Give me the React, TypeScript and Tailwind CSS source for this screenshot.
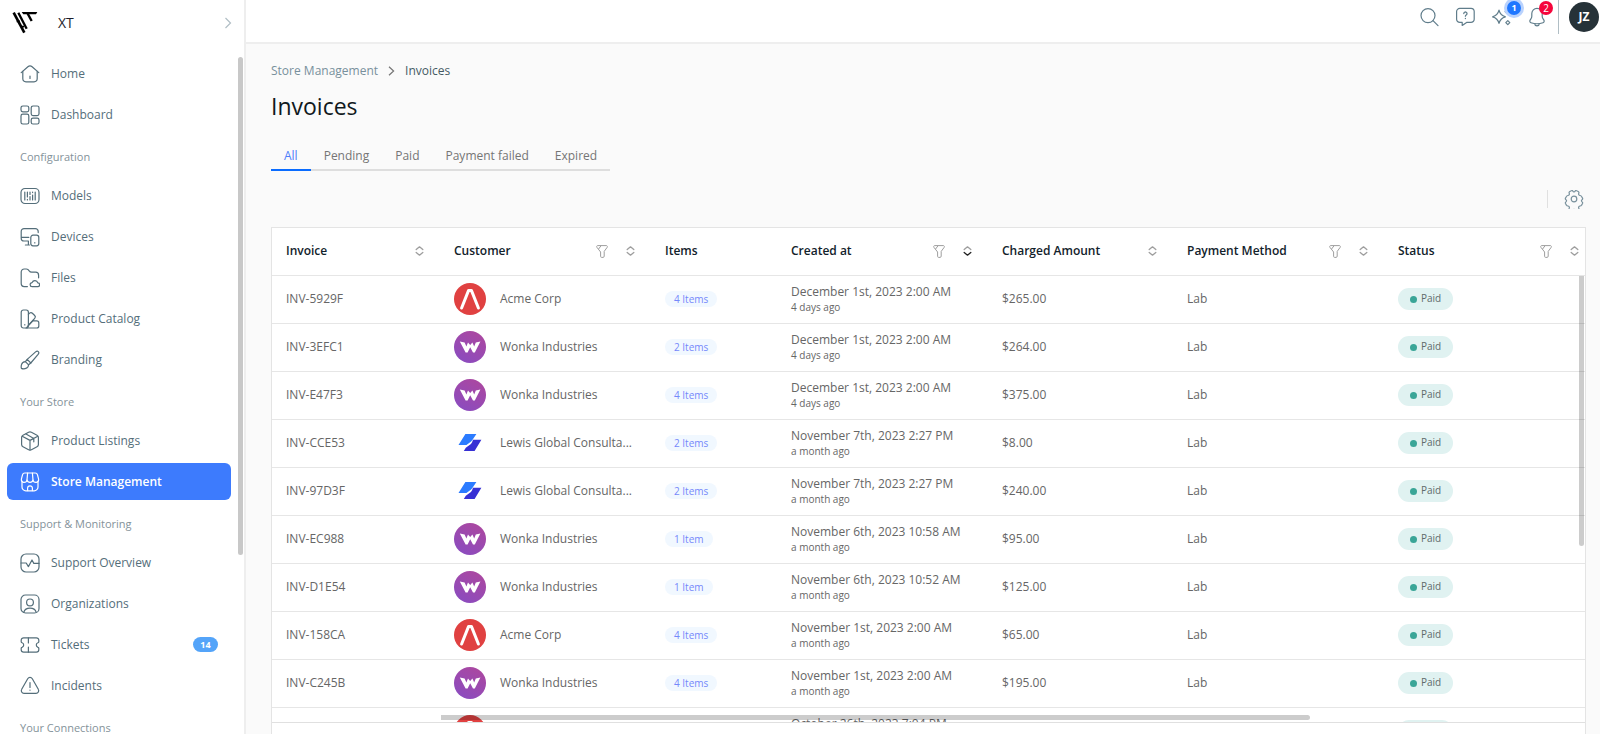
import { useState, type ReactNode } from 'react';
import clsx from 'clsx';

interface NavItem {
  label: string;
  icon: ReactNode;
  badge?: number;
}

interface NavSection {
  title?: string;
  items: NavItem[];
}

interface Column {
  key: string;
  label: string;
  width: string;
  filter?: boolean;
  sort?: boolean;
  sorted?: boolean;
}

interface Invoice {
  id: string;
  customer: 'Acme Corp' | 'Wonka Industries' | 'Lewis Global Consulta...';
  items: string;
  createdAt: string;
  ago: string;
  amount: string;
}

function Icon({ children, size = 20 }: { children: ReactNode; size?: number }) {
  return (
    <svg
      width={size}
      height={size}
      viewBox="0 0 20 20"
      fill="none"
      stroke="currentColor"
      strokeWidth="1.2"
      strokeLinecap="round"
      strokeLinejoin="round"
      className="shrink-0"
      aria-hidden="true"
    >
      {children}
    </svg>
  );
}

const sections: NavSection[] = [
  {
    items: [
      {
        label: 'Home',
        icon: (
          <Icon>
            <path d="M1.2 8.6 7.9 2.8a3.2 3.2 0 0 1 4.2 0l6.700 5.800" />
            <path d="M2.8 7.400v7.200a3.200 3.200 0 0 0 3.200 3.200h8a3.200 3.200 0 0 0 3.200-3.200V7.400M10 12v2.400" />
          </Icon>
        ),
      },
      {
        label: 'Dashboard',
        icon: (
          <Icon>
            <rect x="1" y="1" width="7.8" height="5.8" rx="1.8" />
            <rect x="11.2" y="1" width="7.8" height="9.6" rx="1.8" />
            <rect x="1" y="9.2" width="7.8" height="9.8" rx="1.8" />
            <rect x="11.2" y="13.2" width="7.8" height="5.8" rx="1.8" />
          </Icon>
        ),
      },
    ],
  },
  {
    title: 'Configuration',
    items: [
      {
        label: 'Models',
        icon: (
          <Icon>
            <rect x="1" y="2.5" width="18" height="15" rx="4" />
            <path d="M4.8 6v8M7.4 6v5M7.4 13.4v.6M10 6v2.4M10 10.5V14M12.6 9v5M12.6 6v.6M15.2 6v8" />
          </Icon>
        ),
      },
      {
        label: 'Devices',
        icon: (
          <Icon>
            <path d="M18.2 5.6V4.4a2.8 2.8 0 0 0-2.8-2.8H4A2.8 2.8 0 0 0 1.2 4.4v6.8A2.8 2.8 0 0 0 4 14h4.4M1.2 10.400h7.600M8.400 14v4M5.400 18h4" />
            <rect x="10.8" y="8.2" width="8" height="10.6" rx="2.2" />
            <path d="M14.8 15.6v.4" />
          </Icon>
        ),
      },
      {
        label: 'Files',
        icon: (
          <Icon>
            <path d="M7.4 18.6H4.2A3 3 0 0 1 1.2 15.6V4a3 3 0 0 1 3-3h2.2c1.4 0 2.2.9 2.8 1.9.6.9 1.3 1.3 2.4 1.3h4a3 3 0 0 1 3 3v2.6" />
            <path d="M12.2 18.6a2 2 0 0 1-.1-4 3 3 0 0 1 5.7.2 1.900 1.900 0 0 1-.2 3.800z" />
          </Icon>
        ),
      },
      {
        label: 'Product Catalog',
        icon: (
          <Icon>
            <rect x="1.2" y="1" width="7.2" height="18" rx="2.2" />
            <path d="M8.400 5.400l1.200-1.200a2 2 0 0 1 2.800 0l2.300 2.300a2 2 0 0 1 0 2.800L8.200 16.400" />
            <path d="M13.200 11.800h3.600a2 2 0 0 1 2 2V17a2 2 0 0 1-2 2H6M13.600 11l-7 7.600M4.800 15.600v.3" />
          </Icon>
        ),
      },
      {
        label: 'Branding',
        icon: (
          <Icon>
            <path d="M7.2 9.4 15.6 1.900c1-.8 2-.9 2.700-.3.7.7.6 1.800-.2 2.800L10.800 13" />
            <path d="M7.2 9.4 5.4 11.600l3.200 3.200L10.800 13z" />
            <path d="M5.4 11.6c-2 .2-3.400 1.300-3.900 3.100-.3 1.100-.4 2.700-.1 3.700 1.300.6 3.800.5 5.200-.3 1.300-.7 2-1.900 2-3.300" />
          </Icon>
        ),
      },
    ],
  },
  {
    title: 'Your Store',
    items: [
      {
        label: 'Product Listings',
        icon: (
          <Icon>
            <path d="M8.600 1.300a3 3 0 0 1 2.800 0l5.600 3a2.600 2.600 0 0 1 1.400 2.300v6.800a2.600 2.600 0 0 1-1.400 2.300l-5.600 3a3 3 0 0 1-2.800 0l-5.600-3a2.600 2.600 0 0 1-1.400-2.300V6.600A2.600 2.600 0 0 1 3 4.300z" />
            <path d="M2.200 5.200 10 9.400l7.800-4.200M10 9.400V19M6 3l7.800 4.400v3.400" />
          </Icon>
        ),
      },
      {
        label: 'Store Management',
        icon: (
          <Icon>
            <path d="M2 9.200V15a3.800 3.800 0 0 0 3.800 3.800h8.400A3.800 3.800 0 0 0 18 15V9.200" />
            <path d="M4.800 1h10.400a2.400 2.400 0 0 1 2.300 1.800l1.100 4.400a2.600 2.600 0 0 1-2.600 3.200c-1.600 0-2.800-1-3-2.400a3.100 3.100 0 0 1-6 0c-.2 1.400-1.400 2.400-3 2.400a2.600 2.600 0 0 1-2.600-3.200l1.100-4.400A2.400 2.400 0 0 1 4.800 1z" />
            <path d="M7.600 1 7 8M12.400 1 13 8M7.600 18.600v-2.400a2.400 2.400 0 0 1 4.800 0v2.400" />
          </Icon>
        ),
      },
    ],
  },
  {
    title: 'Support & Monitoring',
    items: [
      {
        label: 'Support Overview',
        icon: (
          <Icon>
            <rect x="1" y="1" width="18" height="18" rx="5" />
            <path d="M1 10h5.200l2.200 3.600L12 7l1.800 3.400H19" />
          </Icon>
        ),
      },
      {
        label: 'Organizations',
        icon: (
          <Icon>
            <rect x="1" y="1" width="18" height="18" rx="4.5" />
            <circle cx="10" cy="8.4" r="3.4" />
            <path d="M3.800 18.200c.8-2.600 3.200-4 6.200-4s5.400 1.400 6.200 4" />
          </Icon>
        ),
      },
      {
        label: 'Tickets',
        badge: 14,
        icon: (
          <Icon>
            <path d="M3.600 2.800h12.800A2.400 2.400 0 0 1 18.800 5.200v1.600c0 .5-.3.800-.8.900a2.400 2.400 0 0 0 0 4.600c.5.100.8.400.8.900v1.600a2.400 2.400 0 0 1-2.400 2.400H3.600a2.400 2.400 0 0 1-2.400-2.400v-1.600c0-.5.300-.8.800-.9a2.400 2.400 0 0 0 0-4.600c-.5-.1-.8-.4-.8-.9V5.200a2.400 2.400 0 0 1 2.400-2.400z" />
            <path d="M8.400 2.800V8M8.400 12v5.200" />
          </Icon>
        ),
      },
      {
        label: 'Incidents',
        icon: (
          <Icon>
            <path d="M7.700 2.700a2.700 2.700 0 0 1 4.600 0l6 10.500a2.700 2.700 0 0 1-2.300 4.100H4a2.700 2.700 0 0 1-2.300-4.100z" />
            <path d="M10 6.600v4.800M10 14v.2" />
          </Icon>
        ),
      },
    ],
  },
  { title: 'Your Connections', items: [] },
];

const tabs = ['All', 'Pending', 'Paid', 'Payment failed', 'Expired'];

const columns: Column[] = [
  { key: 'invoice', label: 'Invoice', width: 'w-[168px]', sort: true },
  { key: 'customer', label: 'Customer', width: 'w-[211px]', filter: true, sort: true },
  { key: 'items', label: 'Items', width: 'w-[126px]' },
  { key: 'created', label: 'Created at', width: 'w-[211px]', filter: true, sort: true, sorted: true },
  { key: 'amount', label: 'Charged Amount', width: 'w-[185px]', sort: true },
  { key: 'method', label: 'Payment Method', width: 'w-[211px]', filter: true, sort: true },
  { key: 'status', label: 'Status', width: 'w-[211px]', filter: true, sort: true },
];

const invoices: Invoice[] = [
  { id: 'INV-5929F', customer: 'Acme Corp', items: '4 Items', createdAt: 'December 1st, 2023 2:00 AM', ago: '4 days ago', amount: '$265.00' },
  { id: 'INV-3EFC1', customer: 'Wonka Industries', items: '2 Items', createdAt: 'December 1st, 2023 2:00 AM', ago: '4 days ago', amount: '$264.00' },
  { id: 'INV-E47F3', customer: 'Wonka Industries', items: '4 Items', createdAt: 'December 1st, 2023 2:00 AM', ago: '4 days ago', amount: '$375.00' },
  { id: 'INV-CCE53', customer: 'Lewis Global Consulta...', items: '2 Items', createdAt: 'November 7th, 2023 2:27 PM', ago: 'a month ago', amount: '$8.00' },
  { id: 'INV-97D3F', customer: 'Lewis Global Consulta...', items: '2 Items', createdAt: 'November 7th, 2023 2:27 PM', ago: 'a month ago', amount: '$240.00' },
  { id: 'INV-EC988', customer: 'Wonka Industries', items: '1 Item', createdAt: 'November 6th, 2023 10:58 AM', ago: 'a month ago', amount: '$95.00' },
  { id: 'INV-D1E54', customer: 'Wonka Industries', items: '1 Item', createdAt: 'November 6th, 2023 10:52 AM', ago: 'a month ago', amount: '$125.00' },
  { id: 'INV-158CA', customer: 'Acme Corp', items: '4 Items', createdAt: 'November 1st, 2023 2:00 AM', ago: 'a month ago', amount: '$65.00' },
  { id: 'INV-C245B', customer: 'Wonka Industries', items: '4 Items', createdAt: 'November 1st, 2023 2:00 AM', ago: 'a month ago', amount: '$195.00' },
  { id: 'INV-A71D0', customer: 'Acme Corp', items: '1 Item', createdAt: 'October 26th, 2023 7:04 PM', ago: 'a month ago', amount: '$85.00' },
];

function CustomerLogo({ customer }: { customer: Invoice['customer'] }) {
  if (customer === 'Acme Corp') {
    return (
      <svg width="32" height="32" viewBox="0 0 32 32" aria-hidden="true">
        <circle cx="16" cy="16" r="16" fill="#e04141" />
        <path d="M7.600 25 14.600 7.400h2.800L24.400 25" fill="none" stroke="#fff" strokeWidth="3" strokeLinecap="round" strokeLinejoin="round" />
      </svg>
    );
  }
  if (customer === 'Wonka Industries') {
    return (
      <svg width="32" height="32" viewBox="0 0 32 32" aria-hidden="true">
        <defs>
          <linearGradient id="wonka" x1="0.2" y1="1" x2="0.8" y2="0">
            <stop offset="0" stopColor="#8a4cc0" />
            <stop offset="1" stopColor="#ac479f" />
          </linearGradient>
        </defs>
        <circle cx="16" cy="16" r="16" fill="url(#wonka)" />
        <path d="M5.800 10.400 10.600 11.500 12.400 15.600 14 11.600 16.200 14 18.400 11.600 20.200 15.600 21.800 11.500 26.400 10.400 20.800 21.600H19L16.200 16.200 13.600 21.600H11.600z" fill="#fff" />
      </svg>
    );
  }
  return (
    <svg width="32" height="32" viewBox="0 0 32 32" aria-hidden="true">
      <path d="M11.400 7h11L18.200 13.200q-1 1.300-2.400 2.300l-3.400 2.600H4.500z" fill="#2b7bff" />
      <path d="M19 12.800h8.400L20.600 24H9.800l2-3.200 4.800-3.600q1-.8 1.500-1.900z" fill="#3730d4" />
    </svg>
  );
}

function FilterIcon() {
  return (
    <svg width="12" height="13" viewBox="0 0 12 13" fill="none" stroke="#9e9e9e" strokeWidth="1" strokeLinejoin="round" aria-hidden="true">
      <path d="M1.600.6h8.800c.9 0 1.300.9.8 1.700L8.200 6.400v4.800c0 .7-.5 1.200-1.200 1.200H5.600c-.6 0-1-.4-1-1V7L.9 2.300C.4 1.500.7.6 1.600.6zM5 .8 2.600 4" />
    </svg>
  );
}

function SortIcon({ sorted }: { sorted?: boolean }) {
  return (
    <svg width="9" height="10" viewBox="0 0 9 10" fill="none" strokeWidth="1.3" strokeLinejoin="round" strokeLinecap="round" aria-hidden="true">
      <path d="M1.200 3.600 4.500.8l3.300 2.800" stroke="#9e9e9e" />
      <path d="M1.200 6.400 4.500 9.200l3.300-2.800" stroke={sorted ? '#212121' : '#9e9e9e'} />
    </svg>
  );
}

function Sidebar() {
  return (
    <aside className="relative flex flex-col w-[246px] shrink-0 bg-white border-r-2 border-[#eeeeee]">
      <div className="flex items-center h-[45px] px-3 shrink-0">
        <svg width="26" height="22" viewBox="0 0 78 66" fill="none" stroke="#000" aria-hidden="true">
          <path d="M5 2 37 62" strokeWidth="8" />
          <path d="M19 2 44 50" strokeWidth="7" />
          <path d="M14 28h10M27 44h9" strokeWidth="5" />
          <path d="M29 0h47l-4 7H34z" fill="#000" stroke="none" />
          <path d="M47 5 59 27" strokeWidth="7" />
        </svg>
        <span className="ml-5 text-sm text-[#1c1c2b]">XT</span>
        <button aria-label="Switch workspace" className="ml-auto text-[#b0bec5]">
          <svg width="8" height="12" viewBox="0 0 8 12" fill="none" stroke="currentColor" strokeWidth="1.2" aria-hidden="true">
            <path d="M1.500 1 6.500 6l-5 5" />
          </svg>
        </button>
      </div>
      <nav className="flex-1 min-h-0 overflow-hidden pt-[10px] pl-[7px] pr-[13px]">
        {sections.map((section, i) => (
          <div key={i}>
            {section.title && (
              <h2 className="flex items-center h-10 px-[13px] text-[11px] text-[#84929a]">{section.title}</h2>
            )}
            {section.items.map((item) => {
              const active = item.label === 'Store Management';
              return (
                <a
                  key={item.label}
                  href="#"
                  className={clsx(
                    'flex items-center gap-[11px] h-[37px] mb-1 px-[13px] rounded-md text-xs',
                    active ? 'bg-[#3d7bfd] text-white font-semibold' : 'text-[#546e7a]',
                  )}
                >
                  {item.icon}
                  <span>{item.label}</span>
                  {item.badge && (
                    <span className="ml-auto w-[25px] rounded-full bg-[#54a4f9] text-center text-[9px] leading-[15px] font-bold text-white">
                      {item.badge}
                    </span>
                  )}
                </a>
              );
            })}
          </div>
        ))}
      </nav>
      <div className="absolute right-px top-[57px] w-[5px] h-[498px] rounded-full bg-[#c8c8c8]" />
    </aside>
  );
}

function TopBar() {
  return (
    <header className="flex items-start h-11 shrink-0 bg-white border-b-2 border-[#eeeeee]">
      <div className="flex items-center ml-auto h-[34px] pr-px text-[#607d8b]">
        <div className="flex items-center gap-4">
          <button aria-label="Search">
            <Icon>
              <circle cx="9" cy="8.600" r="7" />
              <path d="m14 13.600 5 5" />
            </Icon>
          </button>
          <button aria-label="Help">
            <Icon>
              <path d="M4.800 1.400h11.200A3.200 3.200 0 0 1 19.200 4.600v7.600a3.200 3.200 0 0 1-3.200 3.200h-4.400l-4.400 3v-3H4.800a3.200 3.200 0 0 1-3.200-3.200V4.600a3.200 3.200 0 0 1 3.200-3.200z" />
              <path d="M8.800 6.600a1.600 1.600 0 1 1 2.400 1.400c-.5.300-.8.600-.8 1.200M10.400 11.400v.2" strokeWidth="1.3" />
            </Icon>
          </button>
          <button aria-label="What's new" className="relative">
            <Icon>
              <path d="M8 3.200c.9 3.700 2.200 5.500 6.400 6.600-4.200 1.100-5.500 2.900-6.400 6.600C7.100 12.700 5.800 10.900 1.600 9.800 5.800 8.700 7.100 6.900 8 3.200z" />
              <path d="m16.800 13.600 2 2-2 2-2-2zM15.800 3l1.700 1.700-1.700 1.700-1.700-1.700z" />
            </Icon>
            <span className="absolute -top-[9px] left-[13px] flex items-center justify-center w-5 h-5 rounded-full bg-[#b9d2fd]">
              <span className="w-3.5 rounded-full bg-[#1f77ff] text-center text-[9px] leading-[14px] font-bold text-white">1</span>
            </span>
          </button>
          <button aria-label="Notifications" className="relative">
            <Icon>
              <path d="M10 1.400a5.200 5.200 0 0 0-5.200 5.200v2.600c0 1-.3 1.900-.9 2.700l-.8 1.200c-.6 1-.2 2.200.9 2.600 3.800 1.300 8.200 1.300 12 0 1.100-.4 1.500-1.600.9-2.600l-.8-1.200c-.6-.8-.9-1.700-.9-2.700V6.600A5.200 5.200 0 0 0 10 1.400zM7.600 17c.3 1.100 1.200 1.800 2.400 1.800s2.100-.7 2.400-1.800" />
            </Icon>
            <span className="absolute -top-[6px] left-[12px] w-3.5 rounded-full bg-[#f5063c] text-center text-[10px] leading-[14px] text-white">2</span>
          </button>
        </div>
        <div className="w-px h-full ml-[11px] mr-[10px] bg-[#b0bec5]" />
        <button className="w-[30px] h-[30px] rounded-full bg-[#263238] text-xs font-bold text-white">JZ</button>
      </div>
    </header>
  );
}

function InvoiceTable() {
  return (
    <section className="flex flex-col flex-1 min-h-0 bg-white border border-b-0 border-[#e4e4e4]">
      <div className="relative flex-1 min-h-0 overflow-hidden">
        <table className="table-fixed w-[1323px] text-left text-xs text-[#666666]">
          <thead>
            <tr className="h-[47px] border-b border-[#e6e6e6]">
              {columns.map((col) => (
                <th key={col.key} className={clsx('pl-[14px] pr-4 py-0 font-semibold text-[#12222b]', col.width)}>
                  <div className="flex items-center">
                    <span>{col.label}</span>
                    <div className="flex items-center gap-[18px] ml-auto">
                      {col.filter && (
                        <button aria-label={`Filter ${col.label}`}>
                          <FilterIcon />
                        </button>
                      )}
                      {col.sort && (
                        <button aria-label={`Sort ${col.label}`}>
                          <SortIcon sorted={col.sorted} />
                        </button>
                      )}
                    </div>
                  </div>
                </th>
              ))}
            </tr>
          </thead>
          <tbody>
            {invoices.map((inv) => (
              <tr key={inv.id} className="h-12 border-b border-[#e6e6e6]">
                <td className="px-[14px] py-0">{inv.id}</td>
                <td className="px-[14px] py-0">
                  <div className="flex items-center gap-[14px] whitespace-nowrap">
                    <CustomerLogo customer={inv.customer} />
                    <span>{inv.customer}</span>
                  </div>
                </td>
                <td className="px-[14px] py-0">
                  <span className="inline-block px-[9px] rounded-full bg-[#f1f8ff] text-[10px] leading-4 text-[#7588fb]">
                    {inv.items}
                  </span>
                </td>
                <td className="px-[14px] py-0 whitespace-nowrap">
                  <div className="leading-4">{inv.createdAt}</div>
                  <div className="text-[10px] leading-[14px]">{inv.ago}</div>
                </td>
                <td className="px-[14px] py-0">{inv.amount}</td>
                <td className="px-[14px] py-0">Lab</td>
                <td className="px-[14px] py-0">
                  <span className="inline-flex items-center gap-1 h-[22px] px-3 rounded-full bg-[#e0f2f1] text-[10px] text-[#5f6b6b]">
                    <span className="w-[7px] h-[7px] rounded-full bg-[#3aa597]" />
                    Paid
                  </span>
                </td>
              </tr>
            ))}
          </tbody>
        </table>
        <div className="absolute right-px top-12 w-[5px] h-[270px] rounded-b-full bg-black/20" />
        <div className="absolute bottom-[2px] left-[169px] right-[275px] h-[5px] rounded-r-full bg-black/20" />
      </div>
      <div className="h-3 shrink-0 border-t border-[#e0e0e0]" />
    </section>
  );
}

export default function App() {
  const [tab, setTab] = useState('All');

  return (
    <div className="flex h-screen overflow-hidden bg-[#fafafa] font-['Open_Sans',sans-serif]">
      <Sidebar />
      <div className="flex flex-col flex-1 min-w-0">
        <TopBar />
        <main className="flex flex-col flex-1 min-h-0 pl-[25px] pr-[14px]">
          <nav aria-label="Breadcrumb" className="flex items-center gap-[10px] mt-[18px] h-[18px] text-xs">
            <a href="#" className="text-[#78909c]">Store Management</a>
            <svg width="7" height="10" viewBox="0 0 7 10" fill="none" stroke="#757575" strokeWidth="1.2" aria-hidden="true">
              <path d="M1 .8 5.600 5 1 9.200" />
            </svg>
            <span className="text-[#455a64]">Invoices</span>
          </nav>
          <h1 className="mt-[10px] text-[23px] leading-8 text-[#101820]">Invoices</h1>
          <div role="tablist" className="flex w-fit h-8 mt-[17px] shadow-[inset_0_-2px_0_#dedede]">
            {tabs.map((t) => (
              <button
                key={t}
                role="tab"
                aria-selected={tab === t}
                onClick={() => setTab(t)}
                className={clsx(
                  'px-[13px] pt-1 border-b-2 text-xs',
                  tab === t ? 'border-[#0a6cff] text-[#4d7dfb]' : 'border-transparent text-[#757575]',
                )}
              >
                {t}
              </button>
            ))}
          </div>
          <div className="flex items-center justify-end h-14 shrink-0">
            <div className="w-px h-[18px] bg-[#e0e0e0]" />
            <button aria-label="Table settings" className="ml-4 mr-0.5 text-[#78909c]">
              <Icon>
                <circle cx="10" cy="10" r="2.8" />
                <path d="M7.300 1.700C8 1.300 8.600 1.500 8.900 2.200c.4 1 1.800 1 2.200 0 .3-.7.900-.9 1.600-.5l1.500.8c.7.400.9 1 .6 1.700-.5 1.100.1 2.200 1.300 2.300.7.100 1.200.4 1.500 1l.9 1.600c.3.600.2 1.200-.4 1.600-.9.700-.9 1.500 0 2.200.6.400.7 1 .4 1.600l-.9 1.600c-.3.600-.8.900-1.500.9-1.200.1-1.800 1.200-1.300 2.300.3.700.1 1.300-.6 1.600l-1.500.8c-.7.400-1.300.2-1.600-.5-.4-1-1.800-1-2.200 0-.3.700-.9.900-1.600.5l-1.500-.8c-.7-.3-.9-.9-.6-1.600.5-1.100-.1-2.200-1.300-2.300-.7 0-1.200-.3-1.500-.9l-.9-1.600c-.3-.6-.2-1.200.4-1.600.9-.7.9-1.500 0-2.200-.6-.4-.7-1-.4-1.600l.9-1.600c.3-.6.8-.9 1.500-1 1.200-.1 1.800-1.200 1.300-2.300-.3-.7-.1-1.300.6-1.700z" />
              </Icon>
            </button>
          </div>
          <InvoiceTable />
        </main>
      </div>
    </div>
  );
}
